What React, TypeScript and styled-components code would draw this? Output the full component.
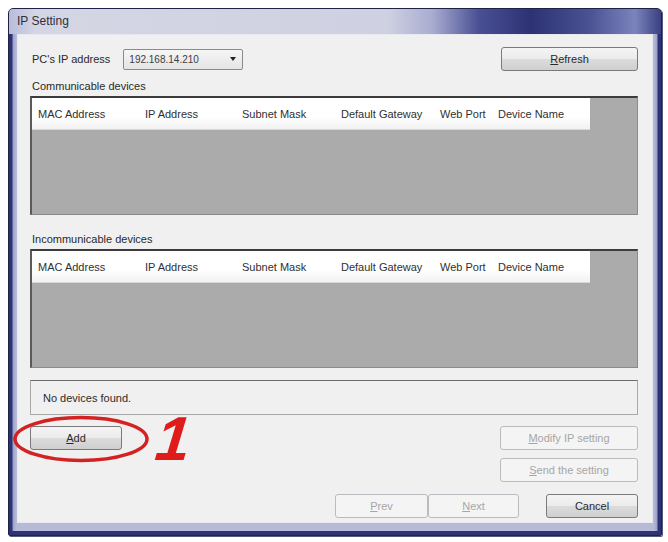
import React from "react";
import styled, { createGlobalStyle, css } from "styled-components";

const Global = createGlobalStyle`
  html, body { margin: 0; padding: 0; background: #ffffff; }
  body { font-family: "Liberation Sans", Arial, sans-serif; font-size: 11px; color: #2a2a2a; }
`;

const Page = styled.div`
  width: 668px;
  height: 542px;
  padding: 8px 6px 6px 8px;
  box-sizing: border-box;
`;

const Window = styled.div`
  position: relative;
  width: 654px;
  height: 528px;
  box-sizing: border-box;
  display: flex;
  flex-direction: column;
  border: 1px solid #1e2148;
  border-radius: 5px 5px 2px 2px;
  background: linear-gradient(90deg, #2b3170 0%, #8a90c0 1.6%, #c9cce0 3%, #c9cce0 97%, #8a90c0 98.4%, #2b3170 100%);
  box-shadow: 1px 1px 0 #555a80;
`;

const TitleBar = styled.div`
  height: 30px;
  display: flex;
  align-items: center;
  padding-left: 8px;
  padding-bottom: 2px;
  box-sizing: border-box;
  border-radius: 4px 4px 0 0;
  background: linear-gradient(90deg, #b8bcd8 0%, #d4d6e4 4%, #cfd1e2 58%, #a8acd0 65%, #4a5094 72%, #2c3274 80%, #4a5294 89%, #7c84bc 96%, #3a4080 100%);
  font-size: 12px;
  color: #2e2e3a;
`;

const Frame = styled.div`
  flex: 1;
  display: flex;
  padding: 0 8px 8px 8px;
  background: linear-gradient(90deg, #2c3272 0px, #2c3272 3px, #9aa0cc 4px, #b6bad6 7px, #b6bad6 calc(100% - 7px), #9aa0cc calc(100% - 4px), #2c3272 calc(100% - 3px));
  border-bottom: 4px solid #2c3272;
`;

const Client = styled.div`
  flex: 1;
  display: flex;
  flex-direction: column;
  background: #f0f0f0;
  border: 1px solid #e8e8f0;
  padding: 12px 14px 4px 12px;
`;

const TopRow = styled.div`
  display: flex;
  align-items: center;
  height: 24px;
`;

const Label = styled.span<{ $indent?: number }>`
  padding-left: ${(p) => p.$indent ?? 2}px;
  color: #2a2a2a;
  white-space: nowrap;
`;

const Combo = styled.div`
  margin-left: 13px;
  width: 120px;
  height: 21px;
  box-sizing: border-box;
  border: 1px solid #8a8a8a;
  border-radius: 2px;
  background: linear-gradient(#f6f6f6, #e4e4e4);
  display: flex;
  align-items: center;
  justify-content: space-between;
  padding: 0 6px 0 5px;
  font-size: 10px;
  color: #404040;
`;

const Arrow = styled.span`
  width: 0;
  height: 0;
  border-left: 3px solid transparent;
  border-right: 3px solid transparent;
  border-top: 4px solid #222;
`;

const Spacer = styled.div<{ $w?: number }>`
  ${(p) => (p.$w ? `flex: 0 0 ${p.$w}px;` : "flex: 1;")}
`;

const Button = styled.div<{ $w: number; $disabled?: boolean }>`
  width: ${(p) => p.$w}px;
  height: 24px;
  box-sizing: border-box;
  display: flex;
  align-items: center;
  justify-content: center;
  border-radius: 3px;
  white-space: nowrap;
  ${(p) =>
    p.$disabled
      ? css`
          border: 1px solid #b8bcc0;
          background: #f4f4f4;
          color: #a6a6a6;
        `
      : css`
          border: 1px solid #7a7a7a;
          background: linear-gradient(#f4f4f4 0%, #ebebeb 50%, #dcdcdc 51%, #cfcfcf 100%);
          color: #2a2a2a;
        `}
  u { text-decoration: underline; }
`;

const SectionLabel = styled.div<{ $top: number }>`
  margin-top: ${(p) => p.$top}px;
  height: 13px;
  line-height: 13px;
  padding-left: 2px;
  margin-bottom: 3px;
`;

const TableBox = styled.div`
  height: 119px;
  box-sizing: border-box;
  border: 1px solid #8a8a8a;
  border-top: 2px solid #3c3c3c;
  border-left: 2px solid #5a5a5a;
  background: #ababab;
  display: flex;
  flex-direction: column;
`;

const HeaderRow = styled.div`
  width: 558px;
  height: 31px;
  display: grid;
  grid-template-columns: 107px 97px 99px 99px 58px 98px;
  background: linear-gradient(#ffffff 0%, #ffffff 60%, #f2f2f2 100%);
  border-bottom: 1px solid #d8d8d8;
`;

const HeaderCell = styled.div`
  display: flex;
  align-items: center;
  padding-left: 6px;
  white-space: nowrap;
  color: #303030;
`;

const StatusBox = styled.div`
  margin-top: 12px;
  height: 35px;
  box-sizing: border-box;
  border: 1px solid #a8a8a8;
  border-top: 1px solid #6c6c6c;
  display: flex;
  align-items: center;
  padding-left: 12px;
  color: #2a2a2a;
`;

const ButtonRow = styled.div<{ $top: number }>`
  display: flex;
  align-items: center;
  margin-top: ${(p) => p.$top}px;
`;

const Annotation = styled.div`
  position: absolute;
  left: 3px;
  top: 405px;
  display: flex;
  align-items: center;
  pointer-events: none;
`;

const Number = styled.span`
  margin-left: 4px;
  font-family: "Liberation Sans", Arial, sans-serif;
  font-weight: bold;
  font-style: italic;
  font-size: 62px;
  line-height: 50px;
  color: #e01b1b;
  transform: skewX(-6deg);
`;

const columns = ["MAC Address", "IP Address", "Subnet Mask", "Default Gateway", "Web Port", "Device Name"];

function DeviceTable() {
  return (
    <TableBox>
      <HeaderRow>
        {columns.map((c) => (
          <HeaderCell key={c}>{c}</HeaderCell>
        ))}
      </HeaderRow>
    </TableBox>
  );
}

export default function App() {
  return (
    <Page>
      <Global />
      <Window>
        <TitleBar>IP Setting</TitleBar>
        <Frame>
          <Client>
            <TopRow>
              <Label>PC's IP address</Label>
              <Combo>
                <span>192.168.14.210</span>
                <Arrow />
              </Combo>
              <Spacer />
              <Button $w={137}>
                <span>
                  <u>R</u>efresh
                </span>
              </Button>
            </TopRow>
            <SectionLabel $top={9}>Communicable devices</SectionLabel>
            <DeviceTable />
            <SectionLabel $top={18}>Incommunicable devices</SectionLabel>
            <DeviceTable />
            <StatusBox>No devices found.</StatusBox>
            <ButtonRow $top={11}>
              <Button $w={92}>
                <span>
                  <u>A</u>dd
                </span>
              </Button>
              <Spacer />
              <Button $w={138} $disabled>
                <span>
                  <u>M</u>odify IP setting
                </span>
              </Button>
            </ButtonRow>
            <ButtonRow $top={8}>
              <Spacer />
              <Button $w={138} $disabled>
                <span>
                  <u>S</u>end the setting
                </span>
              </Button>
            </ButtonRow>
            <ButtonRow $top={12}>
              <Spacer />
              <Button $w={93} $disabled>
                <span>
                  <u>P</u>rev
                </span>
              </Button>
              <Button $w={91} $disabled>
                <span>
                  <u>N</u>ext
                </span>
              </Button>
              <Spacer $w={27} />
              <Button $w={92}>Cancel</Button>
            </ButtonRow>
          </Client>
        </Frame>
        <Annotation>
          <svg width="140" height="50" viewBox="0 0 140 50">
            <ellipse cx="69" cy="25" rx="66" ry="21.5" fill="none" stroke="#d42222" strokeWidth="3.5" />
          </svg>
          <Number>1</Number>
        </Annotation>
      </Window>
    </Page>
  );
}
